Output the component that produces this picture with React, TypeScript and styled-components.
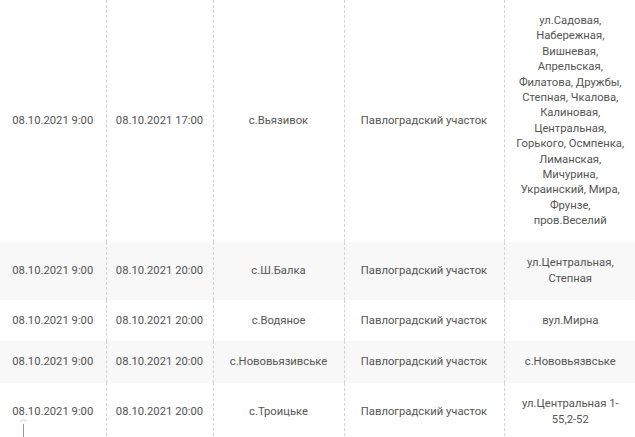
import React from 'react'
import styled, { createGlobalStyle } from 'styled-components'

const GlobalStyle = createGlobalStyle`
    html, body {
        margin: 0;
        padding: 0;
        background: #ffffff;
        overflow: hidden;
    }
`

const Viewport = styled.div`
    position: relative;
    width: 635px;
    height: 437px;
    overflow: hidden;
    background: #ffffff;
`

const Table = styled.table`
    width: 636px;
    table-layout: fixed;
    border-collapse: collapse;
    font-family: Roboto, 'Liberation Sans', sans-serif;
    font-size: 11.25px;
    line-height: 15.4px;
    color: #555555;
`

const Col = styled.col<{ $w: number }>`
    width: ${(p) => p.$w}px;
`

const Row = styled.tr<{ $shaded?: boolean }>`
    background: ${(p) => (p.$shaded ? '#f8f8f8' : '#ffffff')};
`

const Cell = styled.td`
    padding: 13px 8px 13.5px;
    text-align: center;
    vertical-align: middle;
    border-left: 1px dashed #d4d4d4;

    &:first-child {
        border-left: none;
    }
`

const Cursor = styled.svg`
    position: absolute;
    left: 19px;
    top: 417px;
`

type Outage = {
    from: string
    to: string
    village: string
    area: string
    streets: string
}

const widths = [106, 107, 131, 160, 132]

const rows: Outage[] = [
    {
        from: '08.10.2021 9:00',
        to: '08.10.2021 17:00',
        village: 'с.Вьязивок',
        area: 'Павлоградский участок',
        streets:
            'ул.Садовая, Набережная, Вишневая, Апрельская, Филатова, Дружбы, Степная, Чкалова, Калиновая, Центральная, Горького, Осмпенка, Лиманская, Мичурина, Украинский, Мира, Фрунзе, пров.Веселий',
    },
    {
        from: '08.10.2021 9:00',
        to: '08.10.2021 20:00',
        village: 'с.Ш.Балка',
        area: 'Павлоградский участок',
        streets: 'ул.Центральная, Степная',
    },
    {
        from: '08.10.2021 9:00',
        to: '08.10.2021 20:00',
        village: 'с.Водяное',
        area: 'Павлоградский участок',
        streets: 'вул.Мирна',
    },
    {
        from: '08.10.2021 9:00',
        to: '08.10.2021 20:00',
        village: 'с.Нововьязивське',
        area: 'Павлоградский участок',
        streets: 'с.Нововьязвське',
    },
    {
        from: '08.10.2021 9:00',
        to: '08.10.2021 20:00',
        village: 'с.Троицьке',
        area: 'Павлоградский участок',
        streets: 'ул.Центральная 1-55,2-52',
    },
]

const App = () => {
    return (
        <Viewport>
            <GlobalStyle />
            <Table>
                <colgroup>
                    {widths.map((w, i) => (
                        <Col key={i} $w={w} />
                    ))}
                </colgroup>
                <tbody>
                    {rows.map((r, i) => (
                        <Row key={i} $shaded={i % 2 === 1}>
                            <Cell>{r.from}</Cell>
                            <Cell>{r.to}</Cell>
                            <Cell>{r.village}</Cell>
                            <Cell>{r.area}</Cell>
                            <Cell>{r.streets}</Cell>
                        </Row>
                    ))}
                </tbody>
            </Table>
            <Cursor width="9" height="20" viewBox="0 0 9 20">
                <path d="M1.5 4 Q4.5 1.5 7.5 4" fill="none" stroke="#c8c8c8" strokeWidth="1" />
                <line x1="4.5" y1="7" x2="4.5" y2="20" stroke="#9a9a9a" strokeWidth="1" />
            </Cursor>
        </Viewport>
    )
}

export default App
